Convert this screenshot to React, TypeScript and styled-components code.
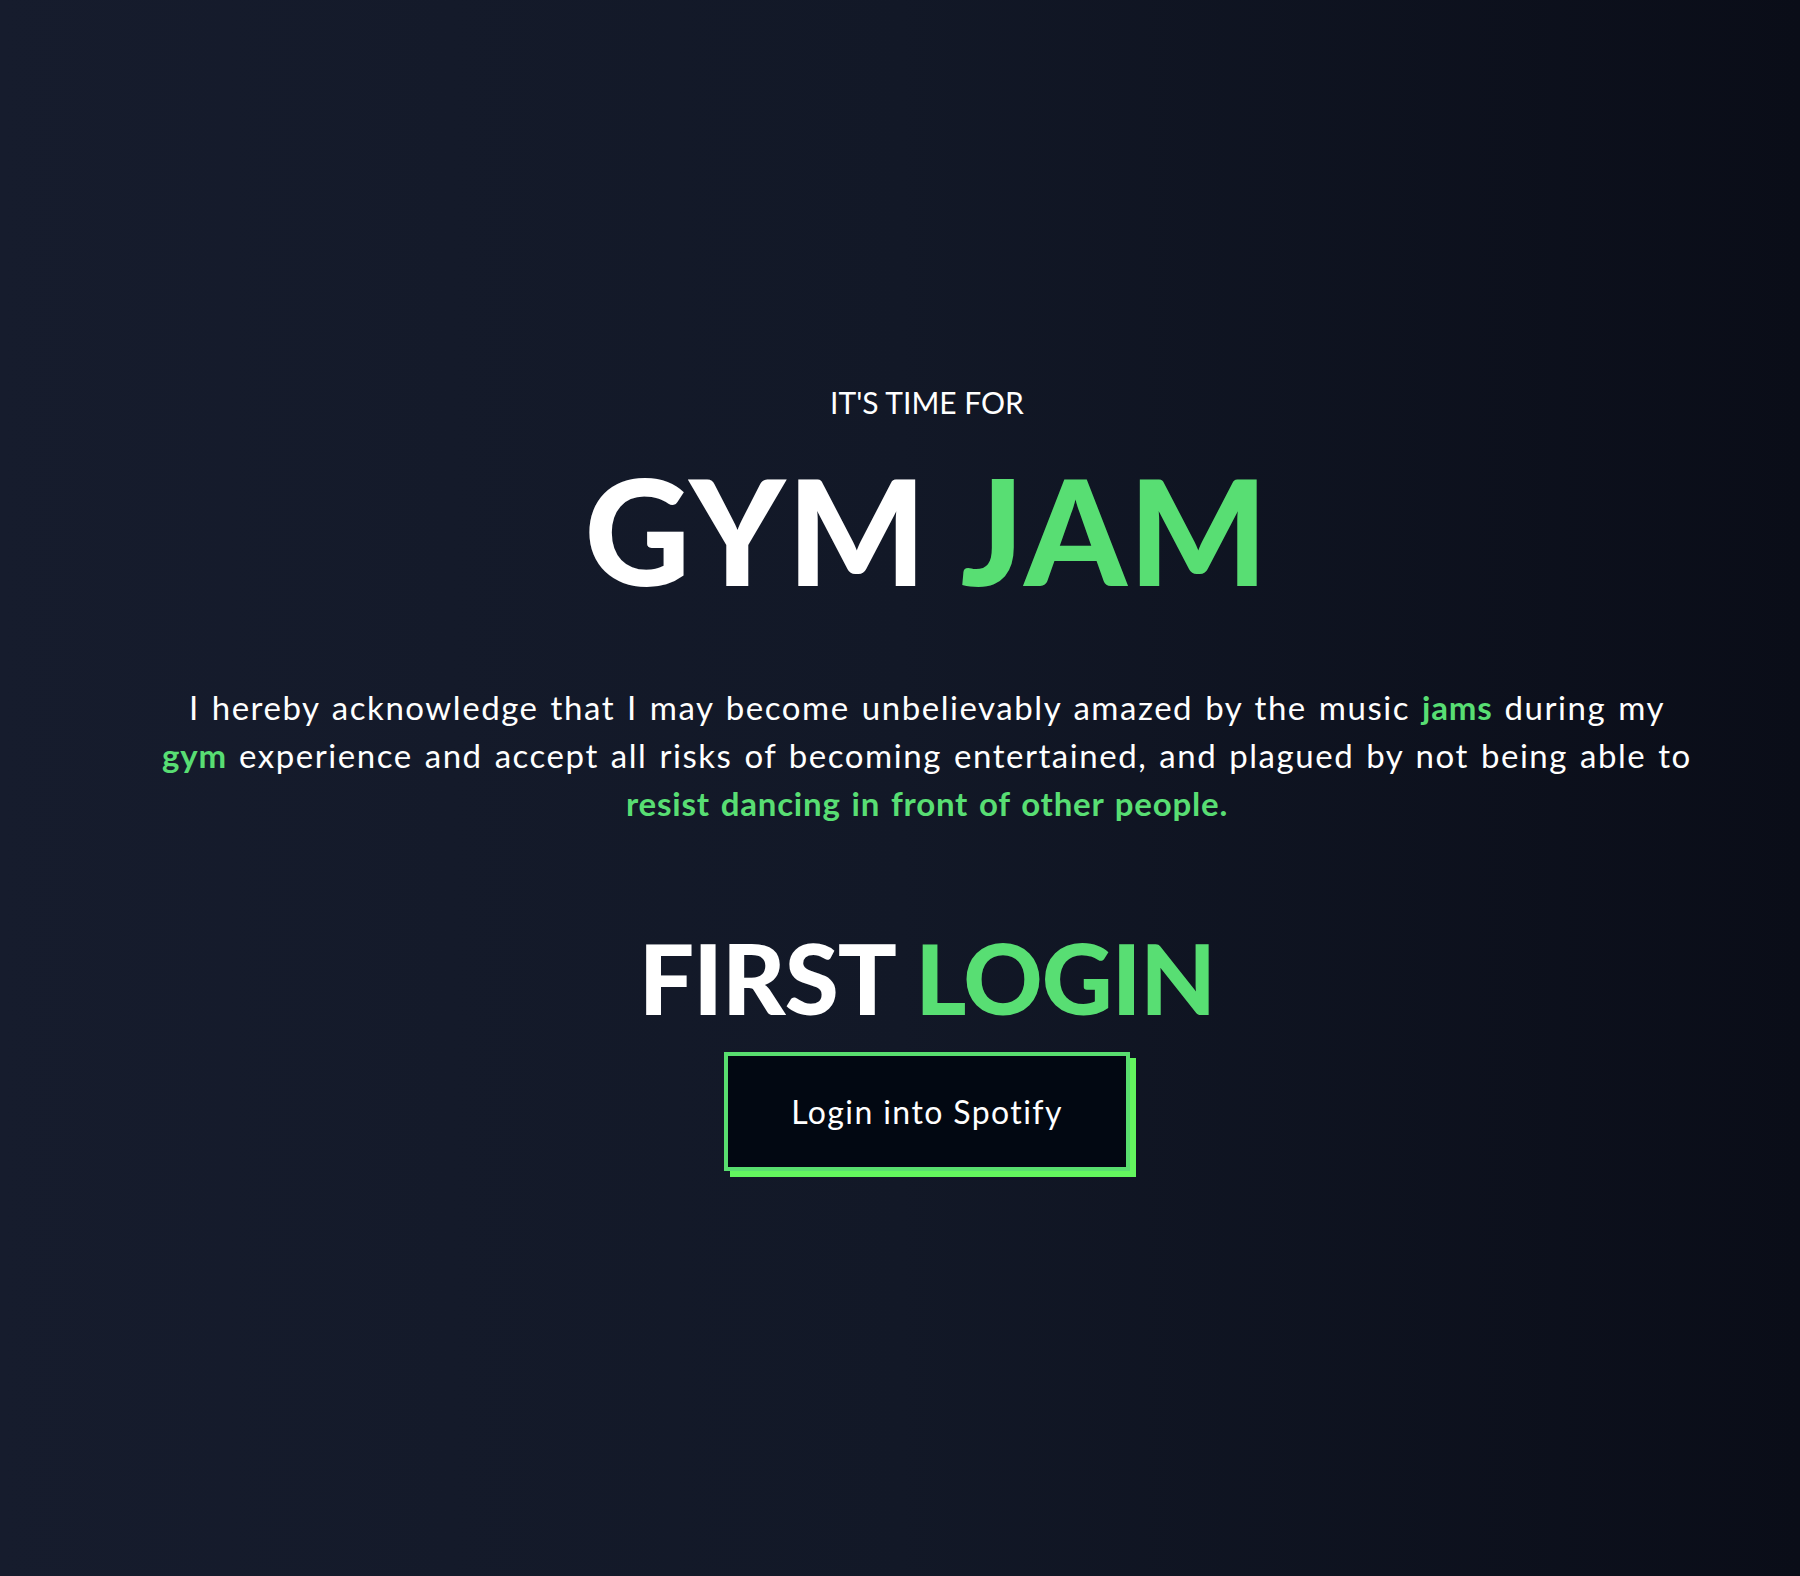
import React from 'react'
import styled, { createGlobalStyle } from 'styled-components'

const GlobalStyle = createGlobalStyle`
  html, body {
    margin: 0;
    padding: 0;
  }
  body {
    min-height: 1576px;
    background: linear-gradient(to right, #161c2d 0%, #121827 50%, #0a0d18 100%);
    font-family: 'Lato', 'Open Sans', sans-serif;
    color: #ffffff;
  }
`

const Page = styled.main`
  display: flex;
  flex-direction: column;
  align-items: center;
  padding: 380px 0 0 54px;
  min-height: 1576px;
  box-sizing: border-box;
`

const Kicker = styled.p`
  margin: 0;
  font-size: 30px;
  line-height: 45px;
  font-weight: 400;
  text-transform: uppercase;
`

const Title = styled.h1`
  margin: 32px 0 0;
  font-size: 146px;
  line-height: 1;
  font-weight: 900;
  letter-spacing: 2px;
`

const Green = styled.span`
  color: #58de73;
`

const Terms = styled.p`
  margin: 80px 0 0;
  font-size: 33px;
  line-height: 48px;
  font-weight: 400;
  letter-spacing: 1.55px;
  word-spacing: 2px;
  text-align: center;
  white-space: nowrap;
`

const Mark = styled.span`
  color: #58de73;
  font-weight: 700;
  letter-spacing: 0.8px;
`

const Subtitle = styled.h2`
  margin: 101px 0 0;
  font-size: 98px;
  line-height: 1;
  font-weight: 900;
  letter-spacing: -1px;
`

const LoginButton = styled.button`
  margin-top: 26px;
  width: 406px;
  height: 119px;
  box-sizing: border-box;
  background: #020812;
  border: 4px solid #58de6f;
  box-shadow: 6px 6px 0 #63f65e;
  color: #ffffff;
  font-family: 'Lato', 'Open Sans', sans-serif;
  font-size: 32px;
  font-weight: 400;
  letter-spacing: 1.4px;
  cursor: pointer;
`

export default function App() {
  return (
    <>
      <GlobalStyle />
      <Page>
        <Kicker>It's time for</Kicker>
        <Title>
          GYM <Green>JAM</Green>
        </Title>
        <Terms>
          I hereby acknowledge that I may become unbelievably amazed by the music <Mark>jams</Mark> during my
          <br />
          <Mark>gym</Mark> experience and accept all risks of becoming entertained, and plagued by not being able to
          <br />
          <Mark>resist dancing in front of other people.</Mark>
        </Terms>
        <Subtitle>
          FIRST <Green>LOGIN</Green>
        </Subtitle>
        <LoginButton type="button">Login into Spotify</LoginButton>
      </Page>
    </>
  )
}
